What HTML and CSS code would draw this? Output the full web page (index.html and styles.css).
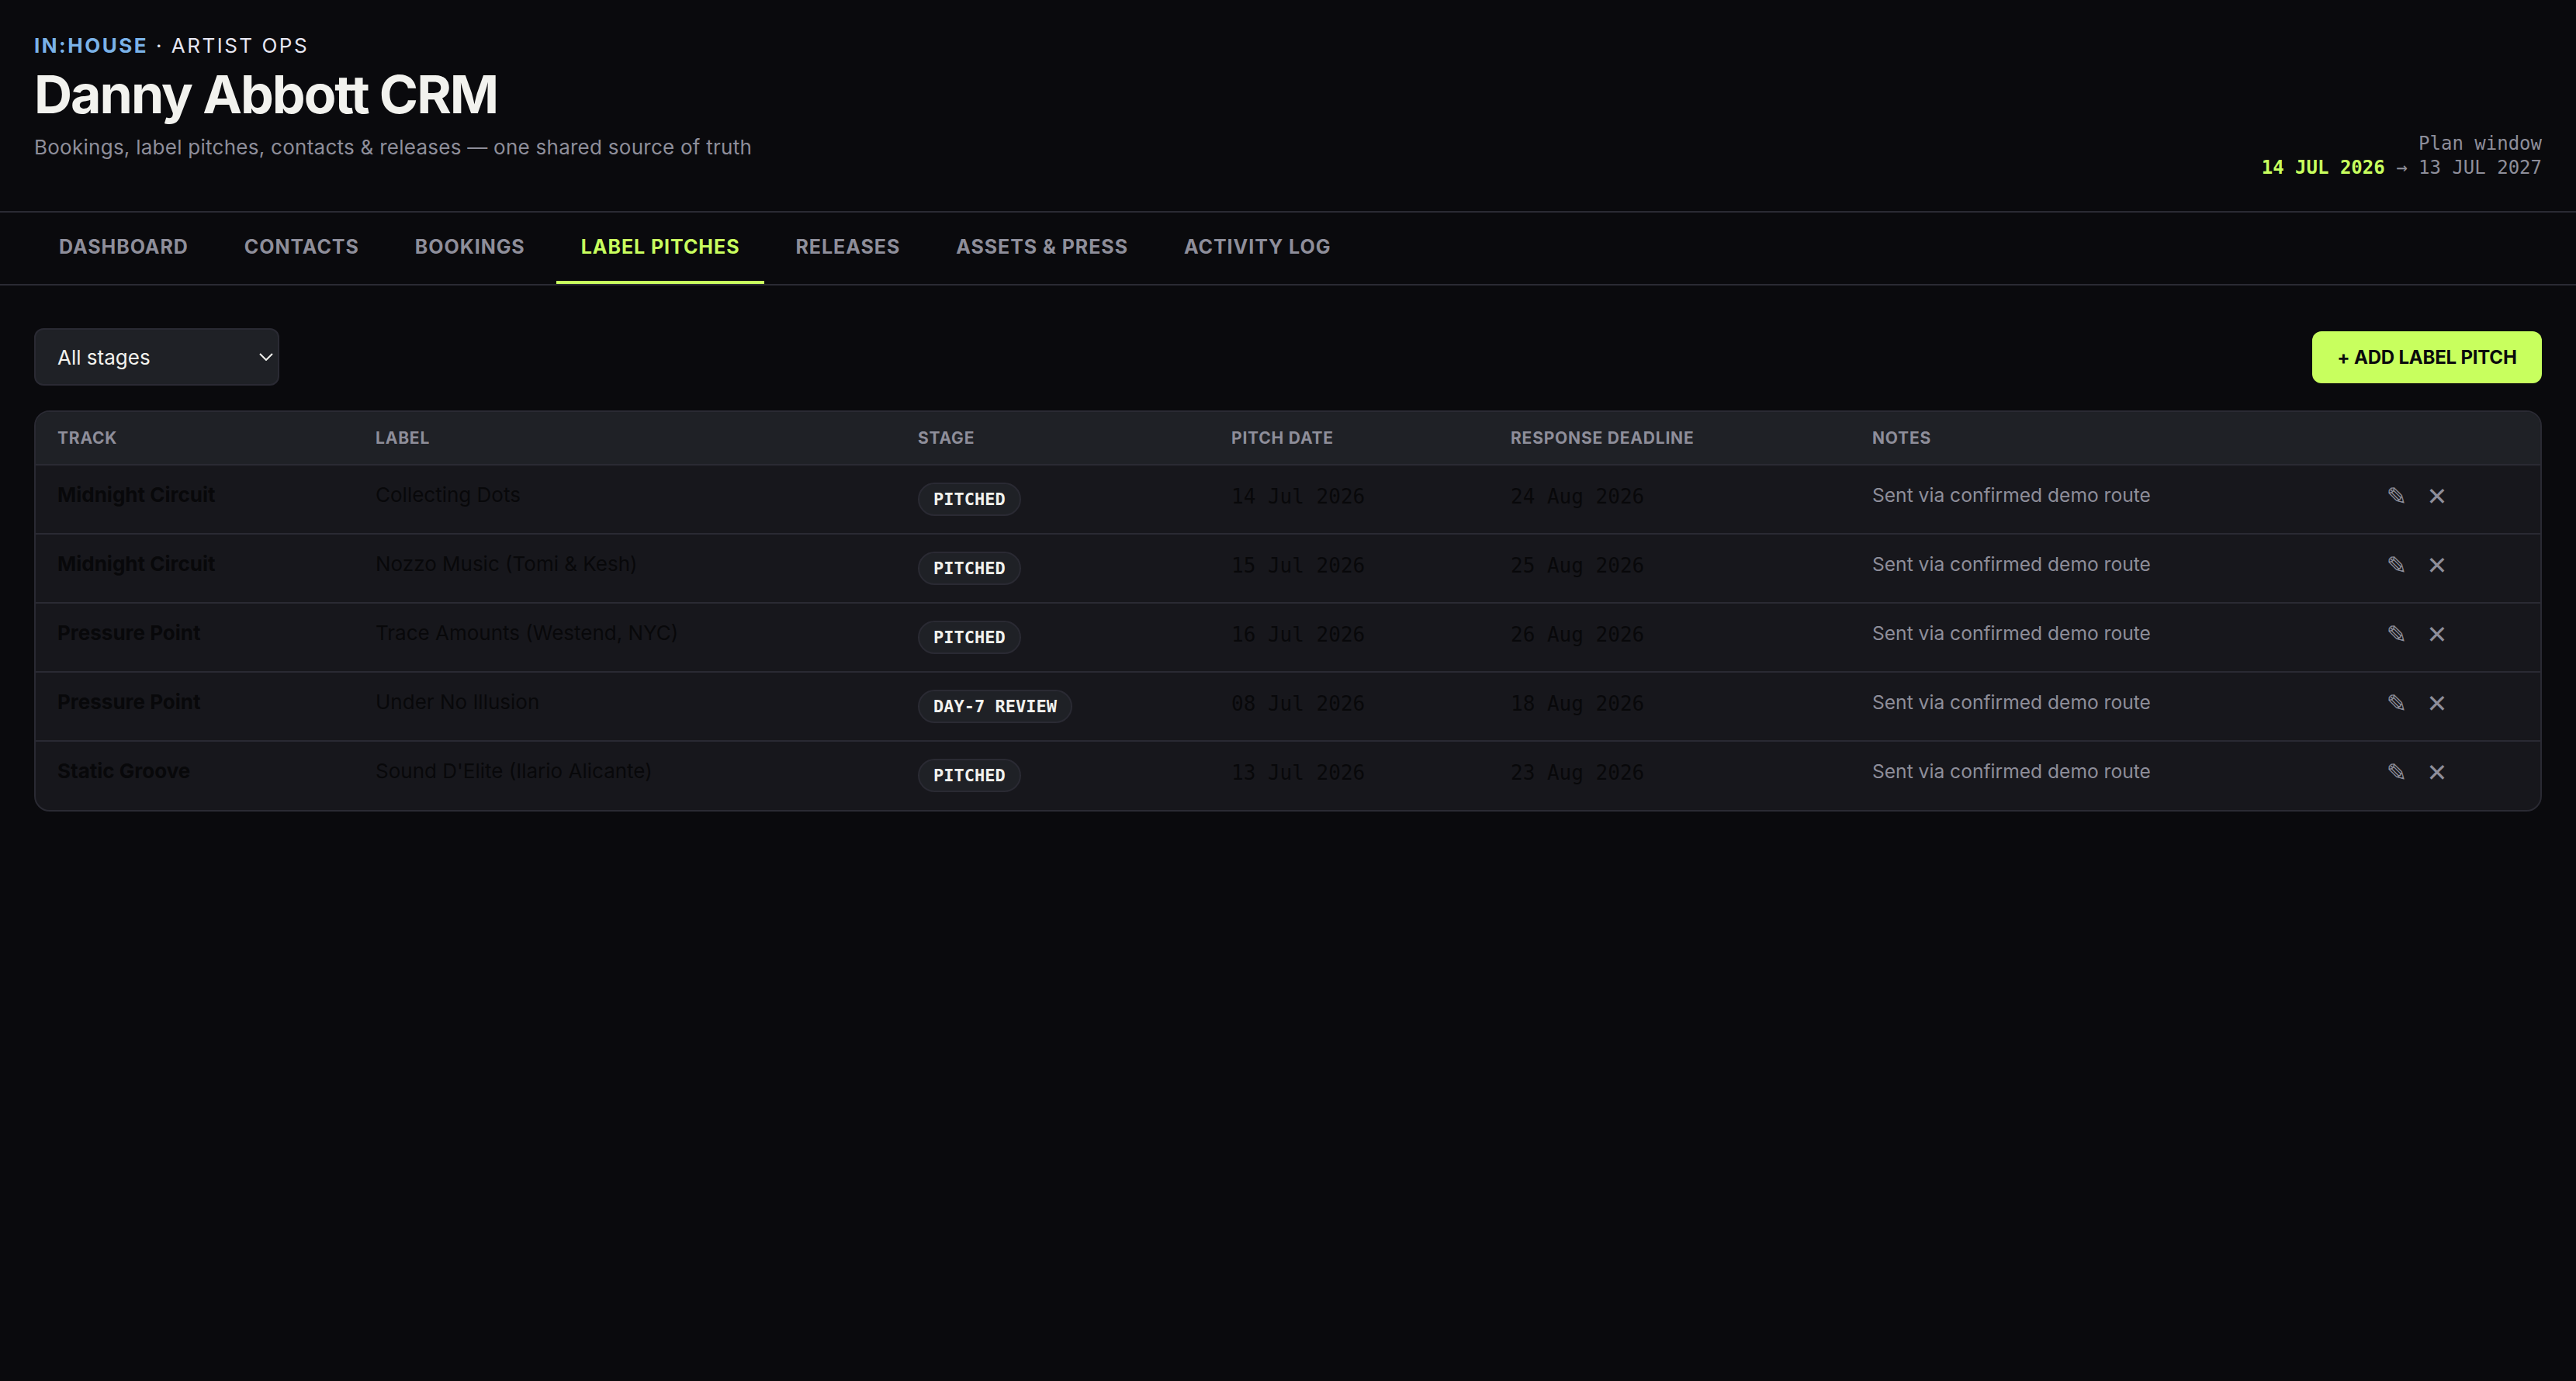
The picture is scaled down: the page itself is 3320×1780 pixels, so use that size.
FILE: index.html
```html
<!DOCTYPE html>
<html lang="en">
<head>
  <meta charset="UTF-8">
  <title>Danny Abbott CRM</title>
  <link rel="stylesheet" href="styles.css">
</head>
<body>
  <header class="top">
    <div class="intro">
      <div class="eyebrow"><span class="brand">IN:HOUSE</span> · ARTIST OPS</div>
      <h1 class="title">Danny Abbott CRM</h1>
      <p class="sub">Bookings, label pitches, contacts &amp; releases — one shared source of truth</p>
    </div>
    <div class="window">
      <div>Plan window</div>
      <div><b class="from">14 JUL 2026</b> → 13 JUL 2027</div>
    </div>
  </header>

  <nav class="tabs">
    <a class="tab">DASHBOARD</a>
    <a class="tab">CONTACTS</a>
    <a class="tab">BOOKINGS</a>
    <a class="tab active">LABEL PITCHES</a>
    <a class="tab">RELEASES</a>
    <a class="tab">ASSETS &amp; PRESS</a>
    <a class="tab">ACTIVITY LOG</a>
  </nav>

  <main class="content">
    <div class="toolbar">
      <select class="filter">
        <option>All stages</option>
      </select>
      <button class="add">+ ADD LABEL PITCH</button>
    </div>

    <div class="table-wrap">
      <table class="pitches">
        <colgroup>
          <col class="c-track"><col class="c-label"><col class="c-stage"><col class="c-pitch"><col class="c-resp"><col class="c-notes"><col>
        </colgroup>
        <thead>
          <tr>
            <th>TRACK</th><th>LABEL</th><th>STAGE</th><th>PITCH DATE</th><th>RESPONSE DEADLINE</th><th>NOTES</th><th></th>
          </tr>
        </thead>
        <tbody>
          <tr>
            <td class="track">Midnight Circuit</td>
            <td>Collecting Dots</td>
            <td class="stage"><span class="badge">PITCHED</span></td>
            <td class="date">14 Jul 2026</td>
            <td class="date">24 Aug 2026</td>
            <td class="notes">Sent via confirmed demo route</td>
            <td class="actions"><span class="ico">✎</span><span class="ico">✕</span></td>
          </tr>
          <tr>
            <td class="track">Midnight Circuit</td>
            <td>Nozzo Music (Tomi &amp; Kesh)</td>
            <td class="stage"><span class="badge">PITCHED</span></td>
            <td class="date">15 Jul 2026</td>
            <td class="date">25 Aug 2026</td>
            <td class="notes">Sent via confirmed demo route</td>
            <td class="actions"><span class="ico">✎</span><span class="ico">✕</span></td>
          </tr>
          <tr>
            <td class="track">Pressure Point</td>
            <td>Trace Amounts (Westend, NYC)</td>
            <td class="stage"><span class="badge">PITCHED</span></td>
            <td class="date">16 Jul 2026</td>
            <td class="date">26 Aug 2026</td>
            <td class="notes">Sent via confirmed demo route</td>
            <td class="actions"><span class="ico">✎</span><span class="ico">✕</span></td>
          </tr>
          <tr>
            <td class="track">Pressure Point</td>
            <td>Under No Illusion</td>
            <td class="stage"><span class="badge">DAY-7 REVIEW</span></td>
            <td class="date">08 Jul 2026</td>
            <td class="date">18 Aug 2026</td>
            <td class="notes">Sent via confirmed demo route</td>
            <td class="actions"><span class="ico">✎</span><span class="ico">✕</span></td>
          </tr>
          <tr>
            <td class="track">Static Groove</td>
            <td>Sound D'Elite (Ilario Alicante)</td>
            <td class="stage"><span class="badge">PITCHED</span></td>
            <td class="date">13 Jul 2026</td>
            <td class="date">23 Aug 2026</td>
            <td class="notes">Sent via confirmed demo route</td>
            <td class="actions"><span class="ico">✎</span><span class="ico">✕</span></td>
          </tr>
        </tbody>
      </table>
    </div>
  </main>
</body>
</html>
```

FILE: styles.css
```css
body {
  margin: 0;
  min-height: 100vh;
  background: #0a0a0d;
  color: #f2f2ee;
  font-family: "Inter", "Liberation Sans", sans-serif;
  color-scheme: dark;
}

.top {
  display: flex;
  justify-content: space-between;
  align-items: flex-end;
  box-sizing: border-box;
  height: 274px;
  padding: 44px 44px 40px;
  border-bottom: 2px solid #2a2a33;
}

.intro {
  align-self: flex-start;
}

.eyebrow {
  font-size: 26px;
  line-height: 30px;
  letter-spacing: 2.5px;
  color: #e6e6f2;
}

.brand {
  color: #7ab2e8;
  font-weight: 700;
}

.title {
  margin: 8px 0 0;
  font-size: 68px;
  line-height: 78px;
  font-weight: 700;
  letter-spacing: -2px;
}

.sub {
  margin: 12px 0 0;
  font-size: 26px;
  line-height: 36px;
  letter-spacing: 0.26px;
  color: #8e8e9a;
}

.window {
  font-family: "DejaVu Sans Mono", monospace;
  font-size: 24px;
  line-height: 31px;
  text-align: right;
  color: #8e8e9a;
}

.from {
  color: #c8ff5e;
}

.tabs {
  display: flex;
  gap: 8px;
  height: 92px;
  padding: 0 44px;
  border-bottom: 2px solid #2a2a33;
}

.tab {
  display: flex;
  align-items: center;
  padding: 0 32px;
  font-size: 25px;
  font-weight: 700;
  letter-spacing: 0.95px;
  color: #8e8e9a;
  border-bottom: 4px solid transparent;
}

.tab.active {
  color: #c8ff5e;
  border-bottom-color: #c8ff5e;
}

.content {
  padding: 55px 44px 44px;
}

.toolbar {
  display: flex;
  justify-content: space-between;
  align-items: center;
  margin-bottom: 32px;
}

.filter {
  appearance: none;
  width: 316px;
  height: 74px;
  padding: 0 28px;
  background: #1f2126 url("data:image/svg+xml,%3Csvg xmlns='http://www.w3.org/2000/svg' width='18' height='10'%3E%3Cpath d='M1 1l8 8 8-8' fill='none' stroke='%23f2f2ee' stroke-width='2'/%3E%3C/svg%3E") no-repeat right 6px center;
  color: #f2f2ee;
  border: 2px solid #2a2a33;
  border-radius: 12px;
  font-family: inherit;
  font-size: 26px;
}

.add {
  width: 296px;
  height: 67px;
  border: 0;
  border-radius: 12px;
  background: #c8ff5e;
  color: #0a0a0d;
  font-family: inherit;
  font-size: 24px;
  font-weight: 700;
  letter-spacing: -0.2px;
}

.table-wrap {
  border: 2px solid #2a2a33;
  border-radius: 20px;
  overflow: hidden;
  background: #17171c;
}

.pitches {
  width: 100%;
  border-collapse: collapse;
  table-layout: fixed;
}

.c-track { width: 410px; }
.c-label { width: 699px; }
.c-stage { width: 404px; }
.c-pitch { width: 360px; }
.c-resp { width: 466px; }
.c-notes { width: 635px; }

.pitches th {
  height: 67px;
  padding: 0 28px;
  background: #1f2126;
  border-bottom: 2px solid #2a2a33;
  text-align: left;
  font-size: 21px;
  font-weight: 700;
  letter-spacing: 0.8px;
  color: #8e8e9a;
}

.pitches td {
  height: 89px;
  padding: 20px 28px;
  box-sizing: border-box;
  border-bottom: 2px solid #2a2a33;
  vertical-align: top;
  font-size: 26px;
  line-height: 36px;
  color: #08080a;
  white-space: nowrap;
}

.pitches tr:last-child td {
  border-bottom: 0;
}

.pitches .track {
  font-weight: 700;
}

.pitches .stage {
  padding-top: 22px;
}

.pitches .date {
  font-family: "DejaVu Sans Mono", monospace;
  padding-top: 22px;
}

.pitches .notes {
  font-size: 24.6px;
  color: #8e8e9a;
}

.badge {
  display: inline-block;
  padding: 0 18px;
  border: 2px solid #2a2a33;
  border-radius: 999px;
  background: #1f2126;
  font-family: "DejaVu Sans Mono", monospace;
  font-size: 22px;
  font-weight: 700;
  line-height: 39px;
  color: #f2f2ee;
}

.pitches .actions {
  padding: 22px 0 0 43px;
}

.ico {
  display: inline-block;
  width: 52px;
  text-align: center;
  font-family: "DejaVu Sans", sans-serif;
  font-size: 32px;
  color: #8e8e9a;
}
```
